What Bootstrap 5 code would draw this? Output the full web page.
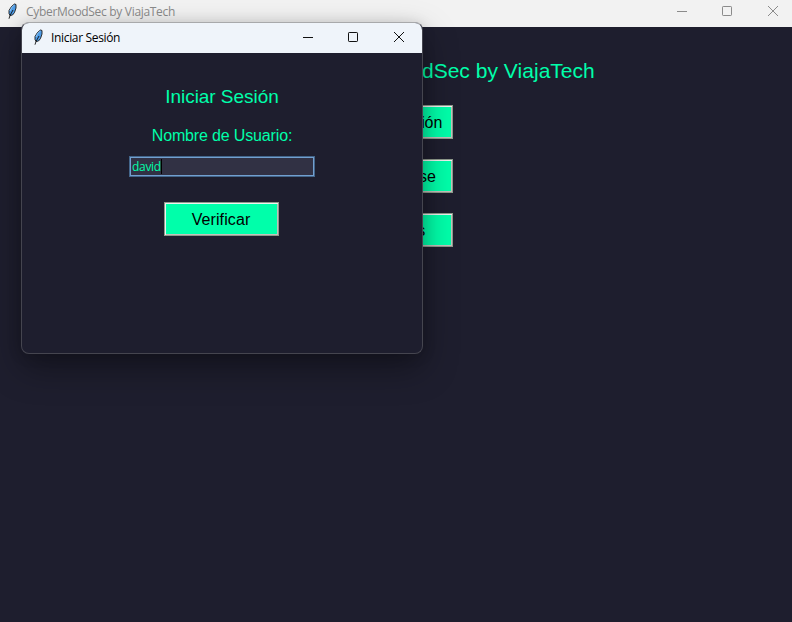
<!DOCTYPE html>
<html lang="es">
<head>
<meta charset="utf-8">
<meta name="viewport" content="width=device-width, initial-scale=1">
<title>CyberMoodSec by ViajaTech</title>
<link href="https://cdn.jsdelivr.net/npm/bootstrap@5.3.0/dist/css/bootstrap.min.css" rel="stylesheet">
<style>
body{background:#1e1e2e;color:#00ffaa;font-family:"Liberation Sans",Arial,sans-serif;line-height:1}
.desk{width:792px;height:622px;background:#1e1e2e}
.titlebar{height:27px;background:#f2f2f2;color:#8b8b8b;font:12px/24px "Open Sans","Noto Sans",sans-serif;padding-left:7px}
.titlebar .caption{letter-spacing:-.31px;margin-left:9px}
.titlebar svg{display:block;flex:none}
.heading-main{font-size:21px;letter-spacing:.03px;line-height:24px;margin-top:32px}
.tk-btn{width:115px;height:34px;border:1px solid #8f9a8c;border-radius:0;background:#00ffaa;color:#000;font-size:16px;line-height:30px;padding:2px 1px 0 0;margin-right:1px;box-shadow:inset 1px 1px #f0f0f0,inset -1px -1px #c4c0bc}
.tk-btn:first-child{letter-spacing:-.12px}
.tk-btn:last-child{letter-spacing:.15px}
.menu-stack{gap:20px;margin-top:22px}
.dialog-win{left:21px;top:22px;width:402px;height:332px;border:1px solid #45454f;border-top-color:#a8a9ab;border-radius:8px;background:#1e1e2e;box-shadow:0 14px 34px rgba(0,0,0,.36),0 2px 14px rgba(0,0,0,.14)}
.dialog-win .titlebar{height:30px;background:#eff4fa;color:#000;line-height:29px;padding-left:11px}
.dialog-win .caption{letter-spacing:-.34px;margin-left:8px}
.heading-dialog{font-size:19px;line-height:22px;letter-spacing:-.05px;margin-top:33px}
.user-label{font-size:16px;line-height:18px;letter-spacing:-.15px;margin-top:19px}
.entry{width:186px;height:21px;margin-top:11px;border:1px solid #43658a;background:#313144;color:#00ffaa;font:12px/17px "Open Sans","Noto Sans",sans-serif;letter-spacing:-.3px;padding-left:2px;box-shadow:inset 0 0 0 1px #729fcf}
.caret{width:1px;height:15px;background:#000}
.dialog-win .verify{margin-top:25px;letter-spacing:.1px}
</style>
</head>
<body class="overflow-hidden">
<svg class="d-none"><symbol id="feather" viewBox="0 0 10 16"><path d="M7.500 1 9 1.500V5L7.500 9.500 5.500 12 3 12.500 2 10.500V7.500L4.500 3.500Z" fill="#4d9be6" stroke="#1c1c1c" stroke-width=".9"/><path d="M7.300 2 4.500 4.800 3 8" fill="none" stroke="#a5d4fb" stroke-width=".8"/><path d="M6 7 3 12.500 2 15.700" fill="none" stroke="#111" stroke-width=".9"/></symbol></svg>
<div class="desk position-relative overflow-hidden">
  <header class="titlebar d-flex">
    <svg width="10" height="16" style="margin-top:3px"><use href="#feather"/></svg>
    <span class="caption">CyberMoodSec by ViajaTech</span>
    <svg class="ms-auto" width="137" height="27" fill="none" stroke="#8b8b8b"><path d="M22 11.5h10"/><rect x="67.500" y="6.500" width="9" height="9" rx=".7"/><path d="m113 6 10 10m0-10-10 10"/></svg>
  </header>
  <main class="d-flex flex-column align-items-center">
    <h1 class="heading-main fw-normal mb-0">Bienvenido a CyberMoodSec by ViajaTech</h1>
    <div class="menu-stack d-flex flex-column">
      <button class="btn tk-btn">Iniciar Sesión</button>
      <button class="btn tk-btn">Registrarse</button>
      <button class="btn tk-btn">Créditos</button>
    </div>
  </main>
  <section class="dialog-win position-absolute overflow-hidden">
    <header class="titlebar d-flex">
      <svg width="10" height="16" style="margin-top:6px"><use href="#feather"/></svg>
      <span class="caption">Iniciar Sesión</span>
      <svg class="ms-auto" width="137" height="30" fill="none" stroke="#111"><path d="M18 14.500h10"/><rect x="63.500" y="9.500" width="9" height="9" rx=".7"/><path d="m109 9 10 10m0-10-10 10"/></svg>
    </header>
    <div class="d-flex flex-column align-items-center">
      <h2 class="heading-dialog fw-normal mb-0">Iniciar Sesión</h2>
      <div class="user-label">Nombre de Usuario:</div>
      <div class="entry d-flex align-items-center"><span>david</span><span class="caret"></span></div>
      <button class="btn tk-btn verify">Verificar</button>
    </div>
  </section>
</div>
<script src="https://cdn.jsdelivr.net/npm/bootstrap@5.3.0/dist/js/bootstrap.bundle.min.js"></script>
</body>
</html>
